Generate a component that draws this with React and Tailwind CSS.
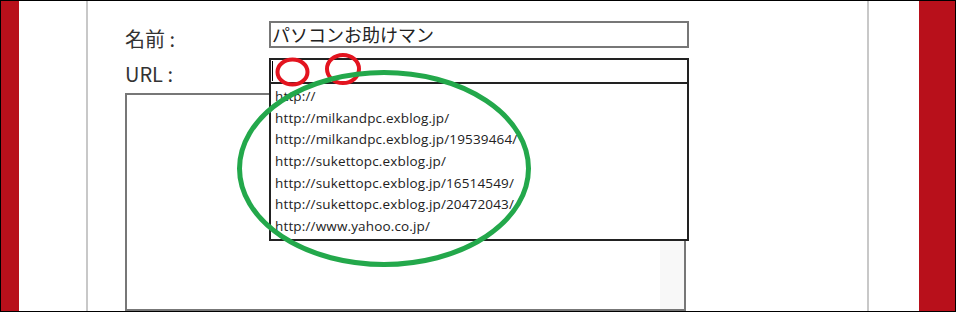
import React from "react";

const urls = [
  "http://",
  "http://milkandpc.exblog.jp/",
  "http://milkandpc.exblog.jp/19539464/",
  "http://sukettopc.exblog.jp/",
  "http://sukettopc.exblog.jp/16514549/",
  "http://sukettopc.exblog.jp/20472043/",
  "http://www.yahoo.co.jp/",
];

export default function App() {
  return (
    <div className="relative w-[956px] h-[312px] overflow-hidden border border-black bg-white flex font-['Noto_Sans_CJK_JP',sans-serif]">
      <div className="w-[18px] bg-[#b8101b]" />
      <div className="w-[67px] bg-white" />
      <div className="w-[2px] bg-[#c8c8c8]" />
      <div className="flex-1 flex flex-col pl-[37px] pt-[20px]">
        <div className="flex h-[27px]">
          <div className="w-[144px] text-[20px] leading-[20px] pt-[8px] text-[#333]">名前 :</div>
          <div className="w-[420px] h-[27px] border-2 border-[#777] text-[18px] leading-[23px] pl-[1px] text-[#222]">
            パソコンお助けマン
          </div>
        </div>
        <div className="flex h-[26px] mt-[10px] relative">
          <div className="w-[144px] text-[20px] leading-[20px] pt-[6px] text-[#333]">URL :</div>
          <div className="relative w-[420px] h-[26px] border-2 border-[#222]">
            <div className="absolute left-[1px] top-[1px] w-[1px] h-[20px] bg-black" />
            <div className="absolute left-[-2px] top-[22px] w-[420px] border-2 border-[#222] bg-white pt-[2px] pb-[1px] pl-[4px] z-10">
              {urls.map((u) => (
                <div key={u} className="text-[13.5px] tracking-[0.15px] leading-[21.67px] text-[#222] font-['Open_Sans',sans-serif] whitespace-nowrap">
                  {u}
                </div>
              ))}
            </div>
          </div>
        </div>
        <div className="mt-[9px] w-[561px] h-[240px] border-2 border-[#777] bg-white flex justify-end">
          <div className="w-[24px] h-full bg-[#f8f8f8]" />
        </div>
      </div>
      <div className="w-[2px] bg-[#c8c8c8]" />
      <div className="w-[50px] bg-white" />
      <div className="w-[36px] bg-[#b8101b]" />
      <svg className="absolute left-[-1px] top-[-1px] pointer-events-none z-20" width="956" height="312" viewBox="0 0 956 312">
        <ellipse cx="292.5" cy="72" rx="15" ry="12.5" fill="none" stroke="#e3141f" strokeWidth="4" />
        <ellipse cx="343" cy="69" rx="16" ry="14" fill="none" stroke="#e3141f" strokeWidth="4" />
        <ellipse cx="384" cy="168.5" rx="144.5" ry="96" fill="none" stroke="#23a84b" strokeWidth="5" />
      </svg>
    </div>
  );
}
